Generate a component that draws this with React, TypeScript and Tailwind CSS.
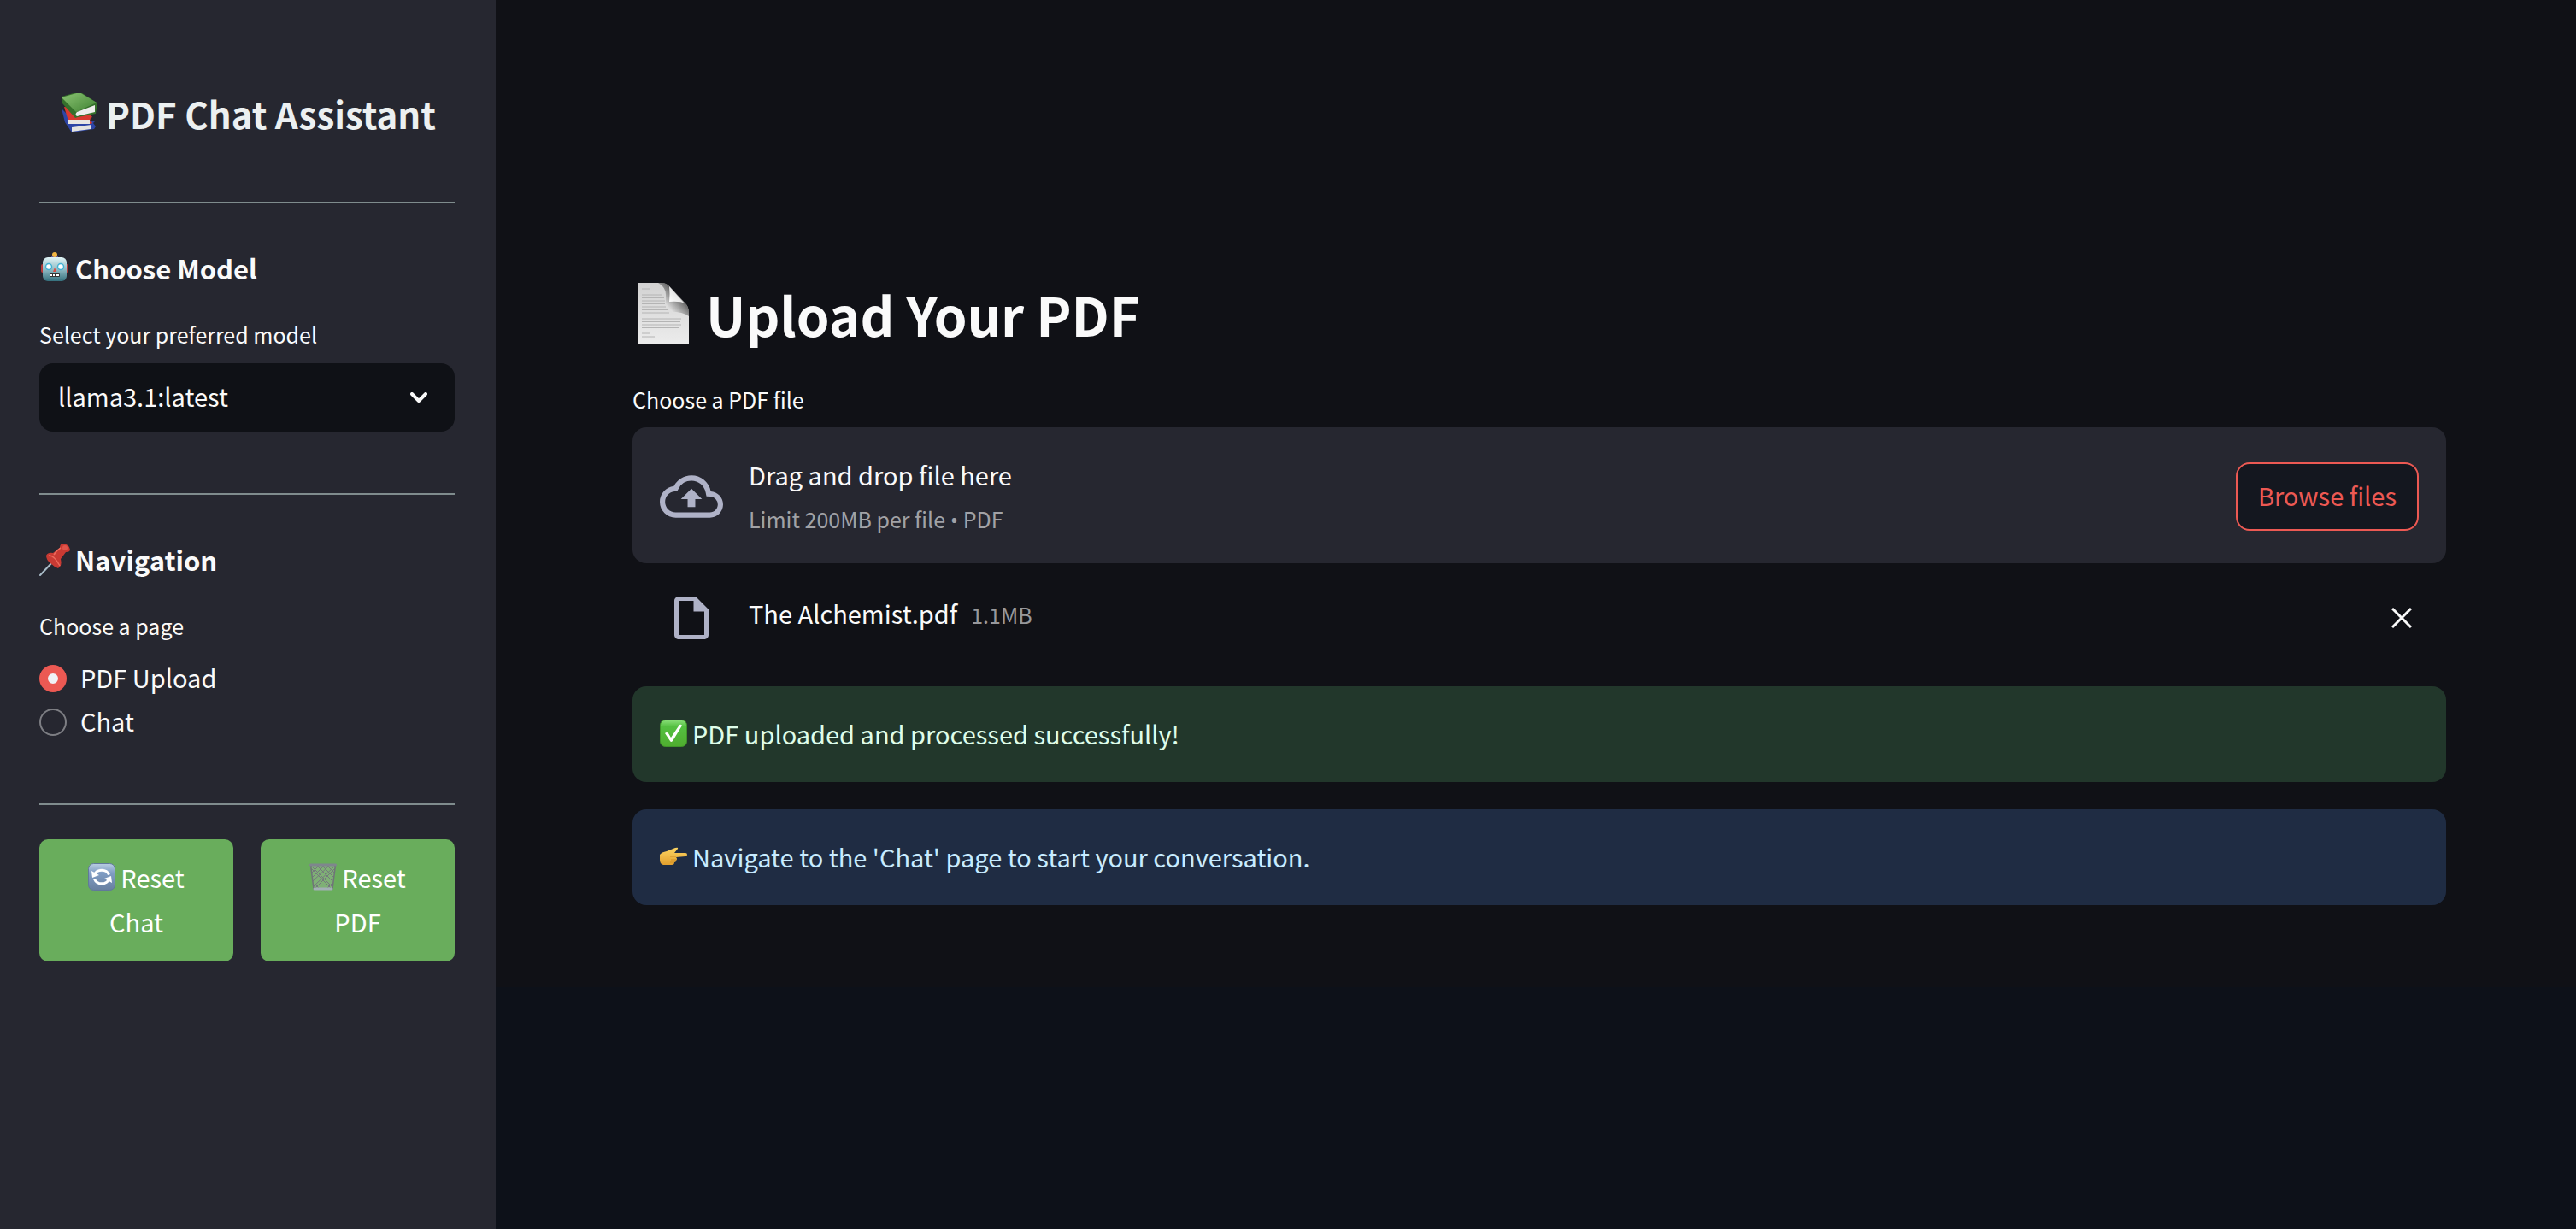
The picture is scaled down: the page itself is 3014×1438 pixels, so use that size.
import { useState } from "react";
import type { ReactNode } from "react";

function Books() {
  return (
    <svg viewBox="0 0 48 48" className="size-12 shrink-0" aria-hidden="true">
      <defs>
        <linearGradient id="bookGreen" x1="0" y1="0" x2="1" y2="1">
          <stop offset="0" stopColor="#8cc474" />
          <stop offset="1" stopColor="#3f8232" />
        </linearGradient>
      </defs>
      <path d="M4 18 8 34l8 12 26-4 2-3-3-4 2-2-28-4z" fill="#2d45a6" />
      <path d="m16 40 23-3-1 5-22 3z" fill="#e3e3e0" />
      <path d="m7 16 6 20h26l1-2-3-1 1-4 2-1-8-10z" fill="#d8392f" />
      <path d="M12 31h25v5H12z" fill="#e8e6e2" />
      <path d="M4 4 25-2l20 13v6l-1 7-21 4-3 1L5 12z" fill="#35702b" />
      <path d="M4 5 25-1l20 12-24 11z" fill="url(#bookGreen)" />
      <path d="m22 22 21-8v8l-21 5q-3-2 0-5z" fill="#eeeeec" />
    </svg>
  );
}

function Robot() {
  return (
    <svg viewBox="0 0 36 40" className="h-10 w-9 shrink-0" aria-hidden="true">
      <defs>
        <linearGradient id="robotFace" x1="0" y1="0" x2="0" y2="1">
          <stop offset="0" stopColor="#e0f4f6" />
          <stop offset="0.5" stopColor="#92bcc5" />
          <stop offset="1" stopColor="#35717e" />
        </linearGradient>
      </defs>
      <path d="M14 5h8v3h-8z" fill="#62549a" />
      <circle cx="18" cy="4" r="3" fill="#f1b542" />
      <rect x="2" y="15" width="32" height="10" rx="2" fill="#b73c3c" />
      <rect x="4" y="7" width="28" height="28" rx="6" fill="url(#robotFace)" />
      <circle cx="11" cy="18" r="3.500" fill="#fff" stroke="#41b2d4" strokeWidth="1.500" />
      <circle cx="25" cy="18" r="3.500" fill="#fff" stroke="#41b2d4" strokeWidth="1.500" />
      <path d="m18 19 2 5h-4z" fill="#d85046" />
      <rect x="12" y="26" width="12" height="4" rx="1" fill="#333" />
      <path d="M14 27v2m3-2v2m3-2v2m2-2v2" stroke="#fff" strokeWidth="2" />
    </svg>
  );
}

function Pin() {
  return (
    <svg viewBox="0 0 36 40" className="h-10 w-9 shrink-0" aria-hidden="true">
      <path d="M1 38 17 21" stroke="#a9bcc8" strokeWidth="2" strokeLinecap="round" />
      <path d="M8 15q2-4 8-3l8-6q0-5 4-5 7 1 8 7 0 3-5 3l-6 8q2 8-3 11-5-2-9-6-5-4-5-9z" fill="#c93a33" />
      <path d="M11 15q6-1 13 12M17 14q3-5 8-8" fill="none" stroke="#ec6a5c" strokeWidth="1.500" />
      <circle cx="30" cy="6" r="3" fill="#e0544a" />
    </svg>
  );
}

function Refresh() {
  return (
    <svg viewBox="0 0 32 32" className="size-8 shrink-0" aria-hidden="true">
      <defs>
        <linearGradient id="refreshTile" x1="0" y1="0" x2="0" y2="1">
          <stop offset="0" stopColor="#b9cde2" />
          <stop offset="0.35" stopColor="#809dc4" />
          <stop offset="1" stopColor="#687f9f" />
        </linearGradient>
      </defs>
      <rect x="0.5" y="0.5" width="31" height="31" rx="6" fill="url(#refreshTile)" stroke="#61799a" />
      <path d="M7.500 13.500a9 8 0 0 1 17 0M24.500 18.500a9 8 0 0 1-17 0" fill="none" stroke="#fff" strokeWidth="3" />
      <path d="m4 9 1 8 8-3zM28 23l-1-8-8 3z" fill="#fff" />
    </svg>
  );
}

function Basket() {
  return (
    <svg viewBox="0 0 32 32" className="size-8 shrink-0" aria-hidden="true">
      <path d="M1.500 2h29L27 30H5z" fill="#b4bbb4" fillOpacity="0.300" />
      <path
        d="M2 6 26 30M2 3l24 24M8 2l19 19M14 2l15 15M20 2l9 9M30 6 6 30M30 3 5 27M24 2 4 21M18 2 3 17M12 2 3 11M26 24l-6 6M6 24l6 6"
        stroke="#74797c"
        strokeWidth="1"
      />
      <path d="M1.500 2 5 30h22l3.500-28" fill="none" stroke="#6f7478" strokeWidth="1.500" />
      <path d="M1.500 2h29" stroke="#7f868d" strokeWidth="3" strokeLinecap="round" />
      <path d="M6 30h20" stroke="#a3b0b6" strokeWidth="3" strokeLinecap="round" />
    </svg>
  );
}

function Page() {
  return (
    <svg viewBox="0 0 60 72" className="h-[72px] w-[60px] shrink-0" aria-hidden="true">
      <defs>
        <linearGradient id="pageFill" x1="0" y1="0" x2="0" y2="1">
          <stop offset="0" stopColor="#d2d2d2" />
          <stop offset="1" stopColor="#ececec" />
        </linearGradient>
        <linearGradient id="pageShade" x1="1" y1="0" x2="0.300" y2="0.700">
          <stop offset="0.300" stopColor="#333" />
          <stop offset="1" stopColor="#333" stopOpacity="0" />
        </linearGradient>
        <linearGradient id="pageCurl" x1="0" y1="1" x2="1" y2="0">
          <stop offset="0" stopColor="#fff" />
          <stop offset="1" stopColor="#ccc" />
        </linearGradient>
      </defs>
      <path d="M0 0h28q6 0 10 5l17 18q5 5 5 11v38H0z" fill="url(#pageFill)" />
      <path
        d="M5 7h9M5 14h24M5 17.500h26M5 21h27M5 24.500h27M5 28h28M5 31.500h30M5 35h32M5 42h46M5 45.500h45M5 49h46M5 52.500h44M5 59h9M5 63h15"
        stroke="#b4b4b4"
        strokeWidth="1"
      />
      <path d="M24 0h4q6 0 10 5l17 18q5 5 5 11v5q-8-6-27-5V14q0-9-9-14z" fill="url(#pageShade)" />
      <path d="M37 4q1 8 0 18 13-1 18 2z" fill="url(#pageCurl)" />
    </svg>
  );
}

function Check() {
  return (
    <svg viewBox="0 0 32 32" className="size-8 shrink-0" aria-hidden="true">
      <defs>
        <linearGradient id="checkTile" x1="0" y1="0" x2="0" y2="1">
          <stop offset="0" stopColor="#8be07a" />
          <stop offset="0.250" stopColor="#54c041" />
          <stop offset="1" stopColor="#4fae2f" />
        </linearGradient>
      </defs>
      <rect x="0.5" y="0.5" width="31" height="31" rx="6" fill="url(#checkTile)" stroke="#40962a" />
      <path d="M6 16q2-2 4 0l3 5L23 6q2-1 3 1L15 25q-2 2-3 0z" fill="#fff" />
    </svg>
  );
}

function Pointer() {
  return (
    <svg viewBox="0 0 32 32" className="size-8 shrink-0" aria-hidden="true">
      <defs>
        <linearGradient id="handFill" x1="0" y1="0" x2="0" y2="1">
          <stop offset="0" stopColor="#fcd563" />
          <stop offset="1" stopColor="#e2a02e" />
        </linearGradient>
      </defs>
      <path
        d="M0 14q2-3 8-4l10-4q4-1 3 1l-4 5h13q2 0 2 2t-2 2l-11 1q2 2 0 4 0 2-2 2 0 3-3 3H4q-4-1-4-6z"
        fill="url(#handFill)"
      />
      <path d="M12 16h7M13 20h6M12 23h5" stroke="#d28f24" strokeWidth="1" />
    </svg>
  );
}

function Divider() {
  return <hr className="h-0.5 border-0 bg-[#7f8c8d]" />;
}

function SectionTitle({ icon, children }: { icon: ReactNode; children: ReactNode }) {
  return (
    <h3 className="flex items-center gap-1.5 text-[31px] leading-10 font-bold">
      {icon}
      {children}
    </h3>
  );
}

function ResetButton({ icon, first, second }: { icon: ReactNode; first: string; second: string }) {
  return (
    <button
      type="button"
      className="flex flex-1 flex-col items-center rounded-[10px] bg-[#69ad5c] px-8 pt-[18px] pb-[21px] text-[29px] leading-[52px] font-normal text-white"
    >
      <span className="flex items-center gap-1.5">
        {icon}
        {first}
      </span>
      <span>{second}</span>
    </button>
  );
}

const pages = ["PDF Upload", "Chat"];

function Sidebar() {
  const [page, setPage] = useState(pages[0]);
  return (
    <aside className="w-[580px] shrink-0 bg-[#262730] pt-[103px] pr-12 pl-[46px]">
      <h1 className="flex items-center justify-center gap-2 text-[42px] leading-[60px] font-bold text-[#ecf0f1]">
        <Books />
        PDF Chat Assistant
      </h1>
      <div className="pt-[73px]">
        <Divider />
      </div>
      <div className="pt-14">
        <SectionTitle icon={<Robot />}>Choose Model</SectionTitle>
      </div>
      <label htmlFor="model" className="mt-[37px] block text-[25px] leading-10">
        Select your preferred model
      </label>
      <div className="relative mt-3.5">
        <select
          id="model"
          className="block h-20 w-full appearance-none rounded-2xl bg-[#0f1116] px-[22px] pb-1 text-[29px] leading-10"
        >
          <option>llama3.1:latest</option>
        </select>
        <svg
          viewBox="0 0 20 12"
          className="pointer-events-none absolute top-[34px] right-8 h-3 w-5"
          aria-hidden="true"
        >
          <path d="m2 2 8 8 8-8" fill="none" stroke="#fafafa" strokeWidth="4" strokeLinecap="round" strokeLinejoin="round" />
        </svg>
      </div>
      <div className="pt-[72px]">
        <Divider />
      </div>
      <div className="pt-14">
        <SectionTitle icon={<Pin />}>Navigation</SectionTitle>
      </div>
      <fieldset className="mt-[37px]">
        <legend className="text-[25px] leading-10">Choose a page</legend>
        <div className="pt-4">
          {pages.map((name) => (
            <label key={name} className="flex h-[51px] items-center gap-4 text-[29px] leading-10">
              <input
                type="radio"
                name="page"
                checked={page === name}
                onChange={() => setPage(name)}
                className="size-8 appearance-none rounded-full border-2 border-[#7d7e83] checked:border-10 checked:border-[#ec5953] checked:bg-[#f0f2f6]"
              />
              <span className="pb-1">{name}</span>
            </label>
          ))}
        </div>
      </fieldset>
      <div className="pt-[70px]">
        <Divider />
      </div>
      <div className="flex gap-8 pt-10">
        <ResetButton icon={<Refresh />} first="Reset" second="Chat" />
        <ResetButton icon={<Basket />} first="Reset" second="PDF" />
      </div>
    </aside>
  );
}

function Uploader() {
  return (
    <section>
      <p className="text-[25px] leading-10">Choose a PDF file</p>
      <div className="mt-[13px] flex items-center rounded-2xl bg-[#262730] px-8 pt-7 pb-[26px]">
        <svg viewBox="0 4 24 16" className="h-[50px] w-[74px] shrink-0" fill="#afb2c7" aria-hidden="true">
          <path d="M19.350 10.040A7.490 7.490 0 0 0 12 4C9.110 4 6.600 5.640 5.350 8.040A5.994 5.994 0 0 0 0 14c0 3.310 2.690 6 6 6h13c2.760 0 5-2.240 5-5 0-2.640-2.050-4.780-4.650-4.960zM19 18H6c-2.210 0-4-1.790-4-4 0-2.050 1.530-3.760 3.560-3.970l1.070-.110.500-.950A5.469 5.469 0 0 1 12 6c2.620 0 4.880 1.860 5.390 4.430l.300 1.500 1.530.110A2.980 2.980 0 0 1 22 15c0 1.650-1.350 3-3 3z" />
          <path d="M8 13h2.550v3h2.900v-3H16l-4-4z" />
        </svg>
        <div className="flex-1 pl-[30px]">
          <p className="text-[29px] leading-[54px]">Drag and drop file here</p>
          <p className="text-[25px] leading-[51px] text-[#a1a2a6]">
            Limit 200MB per file <span className="font-['Open_Sans'] leading-none">•</span> PDF
          </p>
        </div>
        <button
          type="button"
          className="h-20 rounded-2xl border-2 border-[#ec5953] bg-[#14171f] px-6 pb-1 text-[29px] leading-10 text-[#ec5953]"
        >
          Browse files
        </button>
      </div>
      <div className="flex h-32 items-center px-8">
        <svg viewBox="4 2 16 20" className="mx-[17px] h-[50px] w-10 shrink-0" fill="#afb2c7" aria-hidden="true">
          <path d="M14 2H6c-1.100 0-2 .900-2 2v16c0 1.100.900 2 2 2h12c1.100 0 2-.900 2-2V8zM6 20V4h7v5h5v11z" />
        </svg>
        <p className="flex flex-1 items-baseline gap-4 pb-2.5 pl-[30px] text-[29px] leading-10">
          The Alchemist.pdf
          <span className="text-[25px] text-[#97989c]">1.1MB</span>
        </p>
        <button type="button" aria-label="Remove The Alchemist.pdf" className="p-2">
          <svg viewBox="0 0 24 24" className="size-6" aria-hidden="true">
            <path d="m1 1 22 22M23 1 1 23" stroke="#fafafa" strokeWidth="3" />
          </svg>
        </button>
      </div>
    </section>
  );
}

export default function App() {
  return (
    <div className="flex min-h-screen bg-[#0d1119] font-['Noto_Sans_CJK_SC',sans-serif] text-[#fafafa]">
      <Sidebar />
      <main className="min-w-0 flex-1">
        <div className="bg-[#101116] pt-[319px] pr-38 pb-24 pl-40">
          <h2 className="flex items-center gap-5 pl-1.5 text-[62px] leading-[96px] font-bold">
            <Page />
            Upload Your PDF
          </h2>
          <div className="pt-8">
            <Uploader />
          </div>
          <div className="flex flex-col gap-8 pt-4 text-[29px] leading-12">
            <p role="status" className="flex items-center gap-1.5 rounded-2xl bg-[#22372b] px-8 pt-[31px] pb-[33px] text-[#dffde9]">
              <Check />
              PDF uploaded and processed successfully!
            </p>
            <p role="note" className="flex items-center gap-1.5 rounded-2xl bg-[#1f2c43] px-8 pt-[31px] pb-[33px] text-[#c7ebff]">
              <Pointer />
              Navigate to the 'Chat' page to start your conversation.
            </p>
          </div>
        </div>
      </main>
    </div>
  );
}
